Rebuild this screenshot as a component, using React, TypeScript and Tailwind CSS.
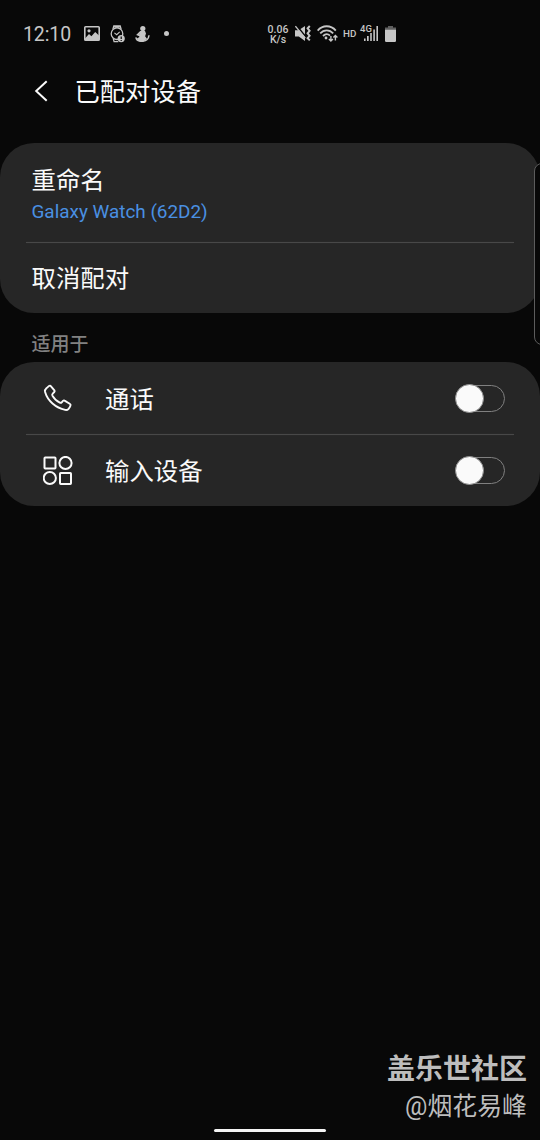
import type { ReactNode } from 'react';

const PictureIcon = () => (
  <svg className="w-4 h-[15px]" viewBox="0 0 16 15">
    <rect x="0.8" y="0.8" width="14.4" height="13.4" rx="0.8" fill="none" stroke="#c6c6c6" strokeWidth="1.6" />
    <circle cx="5" cy="4.8" r="1.6" fill="#c6c6c6" />
    <path d="M1 12.5 5 8l2.4 2.2L11.2 6 15 9.5V14H1z" fill="#c6c6c6" />
  </svg>
);

const WatchIcon = () => (
  <svg className="w-[15px] h-[18px]" viewBox="0 0 15 18" fill="none" stroke="#c6c6c6" strokeWidth="1.3">
    <circle cx="7" cy="8.7" r="5.8" />
    <path d="M2.9 4.2 3.8 1h6.4l.9 3.2M4.4 2.2h5.2M3.2 13.3l.9 3.3h4.2" />
    <path d="m4.4 7.9 2.3 1.8 3-2.8" strokeWidth="1.1" />
    <circle cx="11.2" cy="13.6" r="3.6" fill="#c6c6c6" stroke="none" />
    <path d="M11.2 11.4v2.7m0 .8v1.2" stroke="#080808" strokeWidth="1.2" />
  </svg>
);

const PersonIcon = () => (
  <svg className="w-[15px] h-4" viewBox="0 0 15 16">
    <circle cx="7.8" cy="2.6" r="2.6" fill="#c6c6c6" />
    <path d="M5.2 5h4.8l1 2.6-.9 2.6 1.9 2.6-3.4 2.6H4.4l-2.8-2.6 2.8-1.8-.3-2.7z" fill="#c6c6c6" />
    <path d="M5.7 5.6 2.5 8.8l2.7 1M.9 11.4c.3 2.3 2.9 3.9 5.9 3.9 4 0 6.8-2 7.2-6" fill="none" stroke="#c6c6c6" strokeWidth="1.5" />
  </svg>
);

const MuteIcon = () => (
  <svg className="w-4 h-[17px]" viewBox="0 0 16 17">
    <path d="M0 5.2h3.6L10 1v15l-6.2-4.4H0z" fill="#c6c6c6" />
    <path d="m1.2 .2 9.6 11.6" stroke="#080808" strokeWidth="1.6" />
    <path d="m.4 1.2 9.9 12" stroke="#c6c6c6" strokeWidth="1.3" />
    <path d="m14.8 1-2.2 2.3 2 2.5-2 2.5 2 2.5-2 2.4 2.2 2.2" fill="none" stroke="#c6c6c6" strokeWidth="2" />
  </svg>
);

const WifiIcon = () => (
  <svg className="w-[21px] h-[17px]" viewBox="0 0 21 17" fill="none" stroke="#c6c6c6">
    <path d="M.6 5.6c5-5.8 13.2-5.8 18.2 0M3.2 8.4c3.7-4.1 9.3-4.1 13 0M6 11c2.2-2.2 5-2.2 7-.3" strokeWidth="1.8" />
    <circle cx="9" cy="13" r="1.4" fill="#c6c6c6" stroke="none" />
    <path d="M13.9 11v5m-2-2 2 2 2-2M18.4 15.4v-5m-2 2 2-2 2 2" strokeWidth="1.4" />
  </svg>
);

const SignalIcon = () => (
  <div className="relative w-[19px] h-[17px]">
    <svg className="w-[19px] h-[17px]" viewBox="0 0 19 17" fill="#c6c6c6">
      <path d="M4 13.5h1.6V16H4zM7 11h1.7v5H7zM10.2 7.6h1.6V16h-1.6zM13.3 4.5h1.6V16h-1.6zM16.4 1H18v15h-1.6z" />
    </svg>
    <span className="absolute left-0 -top-px bg-[#080808] text-[9.5px] leading-[9px] font-medium">4G</span>
  </div>
);

const BatteryIcon = () => (
  <svg className="w-[11px] h-4" viewBox="0 0 11 16">
    <path d="M3 0h5v1.5h3V5H0V1.5h3z" fill="#5f5f5f" />
    <path d="M0 3.8h11v11a1.2 1.2 0 0 1-1.2 1.2H1.2A1.2 1.2 0 0 1 0 14.8z" fill="#c6c6c6" />
  </svg>
);

const PhoneIcon = () => (
  <svg className="w-[30px] h-[30px]" viewBox="0 0 30 30" fill="none" stroke="#fafafa" strokeWidth="1.9" strokeLinejoin="round">
    <path d="M3.6 5.1 6.1 2.9c.6-.5 1.3-.4 1.7.2l3.6 4.3c.4.6.4 1.1-.1 1.6L9.7 10.6c-.6.6-.7 1.2-.3 2 1.6 3 4.3 5.4 7.4 7 .8.4 1.4.3 1.9-.3l1.3-1.5c.5-.5 1-.6 1.6-.2l5.1 3.1c.8.5 1.1 1.1.8 1.9-.3 1.1-1 2.2-1.9 3.2-1 1.1-2 1.4-3.4 1.1C12.7 24.9 4.6 17.9 2.1 9.1c-.4-1.6-.1-2.7 1.5-4z" />
  </svg>
);

const ShapesIcon = () => (
  <svg className="w-[30px] h-[30px]" viewBox="0 0 30 30" fill="none" stroke="#fafafa" strokeWidth="2">
    <rect x="1.5" y="1.5" width="11" height="11" rx="0.7" />
    <circle cx="22.5" cy="7" r="6.1" />
    <circle cx="6.8" cy="22" r="6.1" />
    <rect x="17" y="17" width="11" height="11" rx="0.7" />
  </svg>
);

const StatusBar = () => (
  <div className="flex items-center h-[67px] pl-[23px] text-[#c6c6c6] font-[Roboto,sans-serif]">
    <span className="w-[61px] pt-0.5 text-[19.5px] tracking-[-0.1px]">12:10</span>
    <div className="flex items-center w-[183px]">
      <PictureIcon />
      <div className="ml-2.5"><WatchIcon /></div>
      <div className="ml-2.5"><PersonIcon /></div>
      <div className="ml-[14px] w-[5px] h-[5px] rounded-full bg-[#c6c6c6]" />
    </div>
    <p className="w-[22px] pt-0.5 text-[10.5px] leading-[10px] text-center font-medium">
      0.06<br />K/s
    </p>
    <div className="ml-1.5"><MuteIcon /></div>
    <div className="ml-1.5"><WifiIcon /></div>
    <span className="ml-[5px] pt-px w-[14px] text-[9.8px] font-medium">HD</span>
    <div className="ml-[3px]"><SignalIcon /></div>
    <div className="ml-[6px]"><BatteryIcon /></div>
  </div>
);

const Toggle = () => (
  <button role="switch" aria-checked={false} className="flex items-center w-[49px] h-[27px] rounded-full border-[1.5px] border-[#808080]">
    <span className="shrink-0 w-[29px] h-[29px] -ml-0.5 rounded-full bg-[#fafafa] border border-[#8c8c8c]" />
  </button>
);

const Divider = () => <div className="h-px mx-[26px] bg-[#484848] shadow-[0_0_1px_#3c3c3c]" />;

const ProfileRow = ({ icon, label }: { icon: ReactNode; label: string }) => (
  <div className="flex items-center h-[71.5px] pl-[43px] pr-[35.5px]">
    {icon}
    <span className="ml-8 pt-1 flex-1 text-[24.4px] leading-none">{label}</span>
    <Toggle />
  </div>
);

export default function App() {
  return (
    <div className="relative flex flex-col w-[540px] h-[1140px] overflow-hidden bg-[#080808] text-[#fafafa] font-[Roboto,'Noto_Sans_CJK_SC',sans-serif]">
      <StatusBar />

      <header className="flex items-center h-12 pl-[34px]">
        <svg className="w-[14px] h-[22px]" viewBox="0 0 14 22" fill="none" stroke="#fafafa" strokeWidth="2">
          <path d="M12.7 1.2 2.2 11l10.5 9.8" />
        </svg>
        <h1 className="ml-[26.5px] pt-1 text-[25.3px] leading-none">已配对设备</h1>
      </header>

      <section className="mt-[28.4px] h-[170px] rounded-[34px] bg-[#262626]">
        <div className="h-[98.5px] pl-[31.5px] pt-[23px]">
          <div className="text-[24.4px] leading-[30px]">重命名</div>
          <div className="pt-px text-[18.9px] leading-[30px] text-[#4a90e2]">Galaxy Watch (62D2)</div>
        </div>
        <Divider />
        <div className="flex items-center h-[70.5px] pl-[31.5px] pt-0.5 text-[24.4px] leading-none">取消配对</div>
      </section>

      <h2 className="h-[49px] pl-[31.5px] pt-[17px] text-[19px] leading-[30px] font-medium text-[#818181]">适用于</h2>

      <section className="h-[144px] rounded-[34px] bg-[#262626]">
        <ProfileRow icon={<PhoneIcon />} label="通话" />
        <Divider />
        <ProfileRow icon={<ShapesIcon />} label="输入设备" />
      </section>

      {/* Edge panel handle */}
      <div className="absolute left-[534px] top-[163px] w-4 h-[182px] rounded-[8px] border border-[#5c5c5c] bg-[#080808]" />

      <footer className="mt-auto flex flex-col items-end pr-[13px] text-[#bdbdbd]">
        <div className="text-[28px] leading-[36px] font-bold">盖乐世社区</div>
        <div className="mt-[3px] text-[24.9px] leading-[32px]">@烟花易峰</div>
        <div className="mt-1.5 mb-2 mr-[201px] w-[112px] h-[3px] rounded-full bg-[#f4f4f4]" />
      </footer>
    </div>
  );
}
